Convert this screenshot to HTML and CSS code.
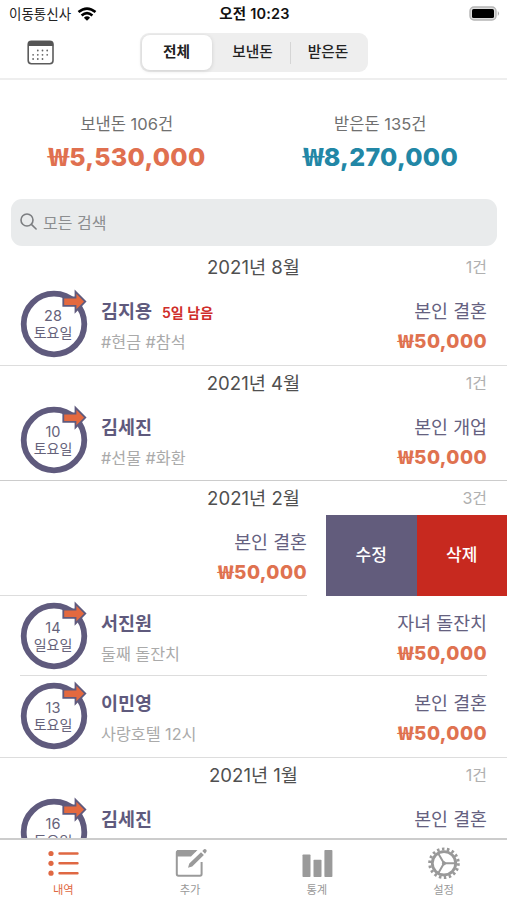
FILE: index.html
```html
<!DOCTYPE html>
<html lang="ko">
<head>
<meta charset="utf-8">
<title>내역</title>
<link rel="stylesheet" href="styles.css">
</head>
<body>
<svg class="defs" aria-hidden="true">
  <symbol id="ring" viewBox="0 0 70 70">
    <circle cx="34" cy="36" r="30.3" fill="none" stroke="#5f5a7d" stroke-width="5.8"/>
    <path d="M43.3 9.5H55.5V3.7L65.3 13.6L55.5 23.5V17.9H43.3Z" fill="#e4693f" stroke="#5f5a7d" stroke-width="1.8"/>
  </symbol>
</svg>
<div class="app">
  <header class="top">
    <div class="status">
      <div class="carrier"><span>이동통신사</span>
        <svg width="20" height="14" viewBox="0 0 20 14" fill="none" stroke="#000" stroke-width="2.6"><path d="M1.5 5.1Q10 -2 18.5 5.1"/><path d="M4.6 8.4Q10 3.8 15.4 8.4"/><path d="M6.9 10.7Q10 7.8 13.1 10.7L10 13.7Z" fill="#000" stroke="none"/></svg>
      </div>
      <div class="time">오전 10:23</div>
      <svg class="battery" width="31" height="15" viewBox="0 0 31 15"><rect x="1" y="1" width="26" height="13" rx="4" fill="#ddd" stroke="#b5b5b5" stroke-width="1.4"/><rect x="3" y="3" width="22" height="9" rx="1.6"/><path d="M28.8 5q2.4 2.5 0 5z" fill="#aaa"/></svg>
    </div>
    <div class="nav">
      <svg class="calendar" width="28" height="26" viewBox="0 0 28 26"><rect x="1.2" y="1.2" width="24.8" height="22.6" rx="3.2" fill="#fff" stroke="#5c5c5c" stroke-width="1.6"/><path d="M1 6V4.2Q1 1 4.2 1H23Q26.2 1 26.2 4.2V6Z" fill="#555"/><g stroke="#666" stroke-width="1.8" stroke-linecap="round" stroke-dasharray="0 4.7"><path d="M10.8 10.5H20.5"/><path d="M6.1 14.8H20.5"/><path d="M6.1 19H15.8"/></g></svg>
      <div class="segments">
        <div class="segment active">전체</div>
        <div class="segment">보낸돈</div>
        <div class="segment divided">받은돈</div>
      </div>
    </div>
  </header>

  <section class="totals">
    <div class="total"><div class="label">보낸돈 106건</div><div class="sum sent"><span class="won">₩</span>5,530,000</div></div>
    <div class="total"><div class="label">받은돈 135건</div><div class="sum received"><span class="won">₩</span>8,270,000</div></div>
  </section>

  <div class="search">
    <svg width="18" height="18" viewBox="0 0 18 18" fill="none" stroke="#7c7e81" stroke-width="1.6" stroke-linecap="round"><circle cx="7" cy="7" r="6"/><path d="M11.4 11.4L16.1 16"/></svg>
    <span>모든 검색</span>
  </div>

  <main class="list">
    <section class="month">
      <div class="month-head"><h2>2021년 8월</h2><span class="count">1건</span></div>
      <div class="row">
        <div class="date"><svg class="ring"><use href="#ring"/></svg><b class="day">28</b><span>토요일</span></div>
        <div class="who"><div class="name">김지용<em>5일 남음</em></div><div class="memo">#현금 #참석</div></div>
        <div class="what"><div class="event">본인 결혼</div><div class="amount"><span class="won">₩</span>50,000</div></div>
      </div>
    </section>
    <section class="month">
      <div class="month-head"><h2>2021년 4월</h2><span class="count">1건</span></div>
      <div class="row">
        <div class="date"><svg class="ring"><use href="#ring"/></svg><b class="day">10</b><span>토요일</span></div>
        <div class="who"><div class="name">김세진</div><div class="memo">#선물 #화환</div></div>
        <div class="what"><div class="event">본인 개업</div><div class="amount"><span class="won">₩</span>50,000</div></div>
      </div>
    </section>
    <section class="month strong">
      <div class="month-head"><h2>2021년 2월</h2><span class="count">3건</span></div>
      <div class="row swiped">
        <div class="what"><div class="event">본인 결혼</div><div class="amount"><span class="won">₩</span>50,000</div></div>
        <div class="actions"><div class="edit">수정</div><div class="delete">삭제</div></div>
      </div>
      <div class="row lined">
        <div class="date"><svg class="ring"><use href="#ring"/></svg><b class="day">14</b><span>일요일</span></div>
        <div class="who"><div class="name">서진원</div><div class="memo">둘째 돌잔치</div></div>
        <div class="what"><div class="event">자녀 돌잔치</div><div class="amount"><span class="won">₩</span>50,000</div></div>
      </div>
      <div class="row">
        <div class="date"><svg class="ring"><use href="#ring"/></svg><b class="day">13</b><span>토요일</span></div>
        <div class="who"><div class="name">이민영</div><div class="memo">사랑호텔 12시</div></div>
        <div class="what"><div class="event">본인 결혼</div><div class="amount"><span class="won">₩</span>50,000</div></div>
      </div>
    </section>
    <section class="month">
      <div class="month-head"><h2>2021년 1월</h2><span class="count">1건</span></div>
      <div class="row">
        <div class="date"><svg class="ring"><use href="#ring"/></svg><b class="day">16</b><span>토요일</span></div>
        <div class="who"><div class="name">김세진</div></div>
        <div class="what"><div class="event">본인 결혼</div></div>
      </div>
    </section>
  </main>

  <nav class="tabs">
    <div class="tab current">
      <svg width="34" height="34" viewBox="0 0 34 34" fill="#df6843"><circle cx="5" cy="7.5" r="2.6"/><circle cx="5" cy="17.3" r="2.6"/><circle cx="5" cy="27.2" r="2.6"/><path d="M13.5 7.5H31.5M13.5 17.3H31.5M13.5 27.2H31.5" stroke="#df6843" stroke-width="2.4" stroke-linecap="round"/></svg>
      <span>내역</span>
    </div>
    <div class="tab">
      <svg width="34" height="34" viewBox="0 0 34 34"><path d="M23 5H5.5Q3.8 5 3.8 6.7V28Q3.8 29.8 5.5 29.8H27Q28.6 29.8 28.6 28V16" fill="none" stroke="#9a9a9a" stroke-width="2"/><path d="M4 4H24.5L18 10.5H4Z" fill="#9a9a9a"/><path d="M15 21.8L16.3 17.6L28 6.2L30.9 9.1L19.2 20.5ZM29.3 5L31 3.3Q32 2.5 33.1 3.5Q34.1 4.6 33.4 5.8L32 7.7Z" fill="#9a9a9a"/></svg>
      <span>추가</span>
    </div>
    <div class="tab">
      <svg width="34" height="34" viewBox="0 0 34 34" fill="#9a9a9a"><rect x="2.5" y="8.5" width="8" height="22.5" rx=".8"/><rect x="13.5" y="13.7" width="8" height="17.3" rx=".8"/><rect x="24.4" y="4" width="8" height="27" rx=".8"/></svg>
      <span>통계</span>
    </div>
    <div class="tab">
      <svg width="34" height="34" viewBox="0 0 34 34" fill="none" stroke="#999"><circle cx="17" cy="17.3" r="14.3" stroke-width="3" stroke-dasharray="2.5 2.4915"/><circle cx="17" cy="17.3" r="11.7" stroke-width="2.8"/><path d="M17 17.3H28M17 17.3L11.4 7.7M17 17.3L11.4 26.9" stroke-width="2"/><circle cx="17" cy="17.3" r="1.6" fill="#999"/></svg>
      <span>설정</span>
    </div>
  </nav>
</div>
</body>
</html>
```

FILE: styles.css
```css
* { box-sizing: border-box; }
body { margin: 0; background: #fff; font-family: Inter, "Noto Sans CJK KR", sans-serif; color: #555; }
svg { display: block; flex: none; }
.defs { position: absolute; width: 0; height: 0; }
.app { height: 900px; display: flex; flex-direction: column; overflow: hidden; white-space: nowrap; }
.top { height: 80px; flex: none; border-bottom: 2px solid #eee; }
.status { height: 27px; display: grid; grid-template-columns: 1fr auto 1fr; align-items: center; padding: 0 7px 0 9px; }
.carrier { display: flex; align-items: center; gap: 6px; color: #222; font-size: 13.5px; line-height: 20px; }
.time { font-size: 14.5px; line-height: 20px; font-weight: 600; color: #111; letter-spacing: .2px; }
.battery { justify-self: end; }
.nav { height: 51px; display: grid; grid-template-columns: 1fr auto 1fr; align-items: center; padding: 0 27px; }
.segments { display: flex; width: 228px; height: 39px; padding: 2px; background: #eee; border-radius: 9px; }
.segment { width: 78px; padding-left: 4px; line-height: 35px; text-align: center; font-size: 14.7px; font-weight: 500; color: #222; }
.active { width: 70px; padding: 0; height: 35px; background: #fff; border-radius: 8px; box-shadow: 0 1px 4px #0002; font-weight: 600; }
.divided { width: 76px; padding-left: 1px; background: linear-gradient(#d5d5d5, #d5d5d5) 0 50% / 1px 22px no-repeat; }
.totals { height: 119px; flex: none; display: grid; grid-template-columns: 1fr 1fr; padding-top: 32px; text-align: center; }
.label { font-size: 16.5px; line-height: 24px; color: #707070; }
.sum { font-size: 25px; line-height: 43px; font-weight: 800; letter-spacing: .3px; }
.won { display: inline-block; margin: 0 .13em; transform: scaleX(1.42); font-family: "Noto Sans CJK KR", sans-serif; font-weight: 700; letter-spacing: 0; line-height: 1; }
.sent { color: #e07050; }
.received { color: #2287a6; }
.search { height: 47px; flex: none; margin: 0 10px 4px 11px; padding: 0 0 1px 9px; display: flex; align-items: center; gap: 5px; background: #e9ebec; border-radius: 11px; font-size: 16px; color: #8c8e90; }
.list { flex: 1; min-height: 0; overflow: hidden; }
.month { border-bottom: 1px solid #ddd; }
.month.strong { box-shadow: 0 -1px #ccc; }
.month-head { height: 34px; display: grid; grid-template-columns: 1fr auto 1fr; align-items: center; padding: 0 20px; }
h2 { grid-column: 2; margin: 0; font-size: 18.6px; line-height: 26px; font-weight: 400; color: #505050; }
.count { justify-self: end; font-size: 16px; line-height: 26px; color: #b0b0b0; }
.row { height: 80.5px; display: flex; padding: 0 20px 0 17px; }
.date { position: relative; width: 73px; margin-right: 11px; padding: 23px 1px 0 0; display: flex; flex-direction: column; align-items: center; font-size: 14px; line-height: 17px; color: #65627a; }
.date b { font-weight: 400; font-size: 14.5px; }
.ring { position: absolute; left: 2.5px; top: 4.3px; width: 70px; height: 70px; }
.who { flex: 1; padding-top: 13px; }
.name { height: 28px; font-size: 18.5px; line-height: 28px; font-weight: 600; color: #5f5a7d; }
.name em { margin-left: 10px; font-style: normal; font-size: 14px; line-height: 1; color: #cf2d2a; }
.memo { font-size: 16.2px; line-height: 34px; color: #aaa; }
.what { padding-top: 13px; text-align: right; }
.event { font-size: 18.4px; line-height: 28px; color: #65617f; }
.amount { font-size: 19px; line-height: 33px; font-weight: 800; letter-spacing: .4px; color: #df7250; }
.swiped { padding: 0; justify-content: space-between; }
.swiped .what { width: 307px; border-bottom: 1px solid #ddd; }
.actions { width: 181px; display: flex; text-align: center; font-size: 17px; line-height: 80px; font-weight: 500; color: #fff; }
.edit { flex: 1; background: #625c7c; }
.delete { flex: 1; background: #c7291f; }
.lined { background: linear-gradient(#ddd, #ddd) 20px 100% / 467px 1px no-repeat; }
.tabs { height: 62px; flex: none; display: grid; grid-template-columns: repeat(4, 1fr); padding-top: 6px; border-top: 2px solid #ccc; background: #fff; }
.tab { display: flex; flex-direction: column; align-items: center; font-size: 11.3px; line-height: 21px; color: #999; }
.current { color: #df6843; }
```
